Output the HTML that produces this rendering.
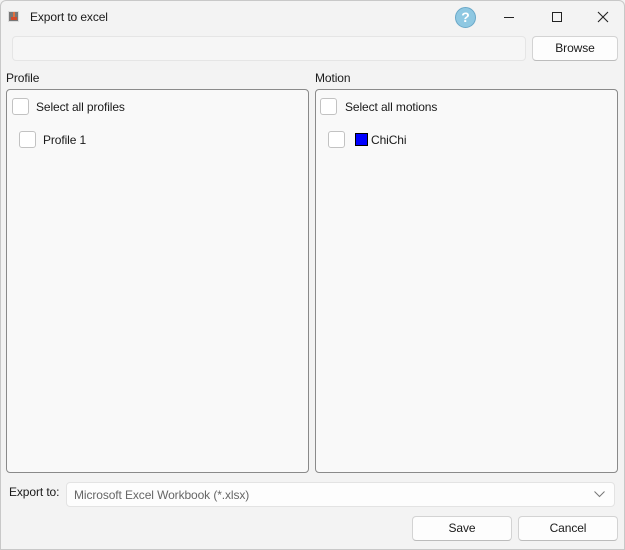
<!DOCTYPE html>
<html><head><style>
*{box-sizing:border-box;margin:0;padding:0}
body{width:625px;height:550px;background:#f3f3f3;font-family:"Segoe UI","Liberation Sans",sans-serif;font-size:12px;color:#1a1a1a;position:relative;overflow:hidden;letter-spacing:-0.1px}
.win{position:absolute;left:0;top:0;width:625px;height:550px;background:#f3f3f3}
.bord{position:absolute;left:0;top:0;width:625px;height:550px;border:1px solid #c8c8c8;border-radius:6px 6px 0 0;pointer-events:none}
.a{position:absolute}
.panel{position:absolute;border:1px solid #8a8a8a;border-radius:4px;background:#f9f9f9}
.cb{position:absolute;width:17px;height:17px;border:1px solid #c2c2c2;border-radius:3px;background:#fff}
.btn{position:absolute;border:1px solid #d3d3d3;border-bottom-color:#bcbcbc;border-radius:4px;background:#fdfdfd;text-align:center;line-height:22px}
</style></head><body><div class="win">
<div class="a" style="left:8px;top:11px;width:11px;height:11px;background:#777;border:1px solid #ddd"><div style="position:absolute;left:2px;top:5px;width:6px;height:3px;background:#d24a2a"></div><div style="position:absolute;left:4px;top:0;width:2px;height:5px;background:#e07040"></div></div>
<div class="a" style="left:30px;top:10px;font-size:12px">Export to excel</div>
<div class="a" style="left:455px;top:7px;width:21px;height:21px;border-radius:50%;background:#8fc8e2;border:1px solid #6aa8c8;color:#fff;font-weight:bold;font-size:14px;text-align:center;line-height:19px">?</div>
<div class="a" style="left:504px;top:17px;width:10px;height:1px;background:#222"></div>
<div class="a" style="left:552px;top:12px;width:10px;height:10px;border:1px solid #222"></div>
<svg class="a" style="left:597px;top:11px" width="12" height="12"><path d="M1 1L11 11M11 1L1 11" stroke="#222" stroke-width="1.1"/></svg>
<div class="a" style="left:12px;top:36px;width:514px;height:25px;border:1px solid #e5e5e5;border-radius:4px;background:#f6f6f6"></div>
<div class="btn" style="left:532px;top:36px;width:86px;height:25px">Browse</div>
<div class="a" style="left:6px;top:71px">Profile</div>
<div class="a" style="left:315px;top:71px">Motion</div>
<div class="panel" style="left:6px;top:89px;width:303px;height:384px">
<div class="cb" style="left:5px;top:8px"></div><div class="a" style="left:29px;top:10px">Select all profiles</div>
<div class="cb" style="left:12px;top:41px"></div><div class="a" style="left:36px;top:43px">Profile 1</div>
</div>
<div class="panel" style="left:315px;top:89px;width:303px;height:384px">
<div class="cb" style="left:4px;top:8px"></div><div class="a" style="left:29px;top:10px">Select all motions</div>
<div class="cb" style="left:12px;top:41px"></div>
<div class="a" style="left:39px;top:43px;width:13px;height:13px;background:#0000ff;border:1px solid #000"></div>
<div class="a" style="left:55px;top:43px">ChiChi</div>
</div>
<div class="a" style="left:9px;top:485px">Export to:</div>
<div class="a" style="left:66px;top:482px;width:549px;height:25px;border:1px solid #e3e3e3;border-radius:4px;background:#fdfdfd"><span class="a" style="left:7px;top:5px;color:#666">Microsoft Excel Workbook (*.xlsx)</span>
<svg class="a" style="left:527px;top:8px" width="11" height="7"><path d="M0.5 0.5L5.5 5.5L10.5 0.5" stroke="#777" fill="none"/></svg></div>
<div class="btn" style="left:412px;top:516px;width:100px;height:25px">Save</div>
<div class="btn" style="left:518px;top:516px;width:100px;height:25px">Cancel</div>
</div><div class="bord"></div></body></html>
